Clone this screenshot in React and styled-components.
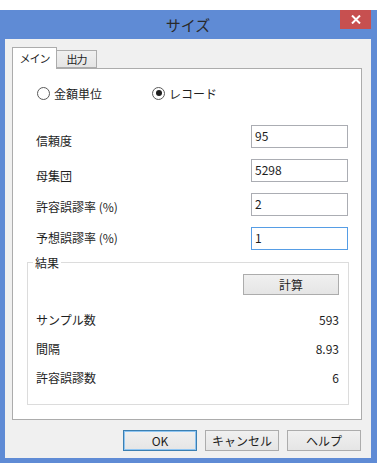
import React from 'react';
import styled, { createGlobalStyle } from 'styled-components';

const GlobalStyle = createGlobalStyle`
  body {
    margin: 0;
    background: #ffffff;
    font-family: "Noto Sans CJK JP", "Noto Sans", sans-serif;
    font-size: 12px;
    color: #1e1e1e;
  }
`;

const fields = [
  { label: '信頼度', value: '95', dy: 4 },
  { label: '母集団', value: '5298', dy: 5 },
  { label: '許容誤謬率 (%)', value: '2', dy: 2 },
  { label: '予想誤謬率 (%)', value: '1', dy: -1, focused: true },
];

const results = [
  { label: 'サンプル数', value: '593' },
  { label: '間隔', value: '8.93' },
  { label: '許容誤謬数', value: '6' },
];

export default function App() {
  return (
    <>
      <GlobalStyle />
      <Window>
        <TitleBar>
          <span />
          <Title>サイズ</Title>
          <CloseButton>
            <svg width="10" height="9" viewBox="0 0 10 9">
              <path d="M1 0.5 L9 8.5 M9 0.5 L1 8.5" stroke="#ffffff" strokeWidth="2" />
            </svg>
          </CloseButton>
        </TitleBar>
        <Client>
          <Tabs>
            <Tab $active>メイン</Tab>
            <Tab>出力</Tab>
          </Tabs>
          <Panel>
            <RadioRow>
              <RadioItem>
                <RadioCircle />
                金額単位
              </RadioItem>
              <RadioItem>
                <RadioCircle $checked />
                レコード
              </RadioItem>
            </RadioRow>
            <FieldGrid>
              {fields.map((f) => (
                <React.Fragment key={f.label}>
                  <FieldLabel $dy={f.dy}>{f.label}</FieldLabel>
                  <Input $focused={f.focused}>{f.value}</Input>
                </React.Fragment>
              ))}
            </FieldGrid>
            <Group>
              <Legend>結果</Legend>
              <CalcRow>
                <Button $width={96}>計算</Button>
              </CalcRow>
              {results.map((r) => (
                <ResultRow key={r.label}>
                  <span>{r.label}</span>
                  <span>{r.value}</span>
                </ResultRow>
              ))}
            </Group>
          </Panel>
          <ButtonBar>
            <Button $default>OK</Button>
            <Button>キャンセル</Button>
            <Button>ヘルプ</Button>
          </ButtonBar>
        </Client>
      </Window>
    </>
  );
}

const Window = styled.div`
  margin-top: 10px;
  width: 377px;
  height: 453px;
  box-sizing: border-box;
  padding: 0 6px 5px 5px;
  background: #5f8bd5;
  display: flex;
  flex-direction: column;
`;

const TitleBar = styled.div`
  height: 29px;
  display: grid;
  grid-template-columns: 1fr auto 1fr;
  align-items: start;
`;

const Title = styled.div`
  font-size: 15px;
  line-height: 29px;
  color: #2a2a2a;
`;

const CloseButton = styled.div`
  justify-self: end;
  width: 31px;
  height: 19px;
  background: #c75050;
  display: flex;
  align-items: center;
  justify-content: center;
`;

const Client = styled.div`
  flex: 1;
  background: #f0f0f0;
  padding: 8px 9px 7px 7px;
  display: flex;
  flex-direction: column;
`;

const Tabs = styled.div`
  display: flex;
  align-items: flex-end;
  height: 21px;
  position: relative;
  z-index: 1;
`;

const Tab = styled.div`
  box-sizing: border-box;
  height: ${(p) => (p.$active ? '22px' : '18px')};
  margin-bottom: ${(p) => (p.$active ? '-1px' : '0')};
  width: ${(p) => (p.$active ? '45px' : '41px')};
  border: 1px solid #acacac;
  border-bottom: ${(p) => (p.$active ? 'none' : '1px solid #acacac')};
  margin-left: ${(p) => (p.$active ? '0' : '-1px')};
  background: ${(p) => (p.$active ? '#ffffff' : 'linear-gradient(#f0f0f0, #e5e5e5)')};
  font-size: 11px;
  letter-spacing: -1px;
  text-align: center;
  line-height: ${(p) => (p.$active ? '20px' : '16px')};
  white-space: nowrap;
  overflow: hidden;
`;

const Panel = styled.div`
  box-sizing: border-box;
  height: 352px;
  background: #ffffff;
  border: 1px solid #acacac;
  padding: 16px 13px 0 14px;
`;

const RadioRow = styled.div`
  display: flex;
  padding-left: 10px;
  height: 16px;
  align-items: center;
`;

const RadioItem = styled.div`
  width: 115px;
  display: flex;
  align-items: center;
  gap: 4px;
  font-size: 12px;
`;

const RadioCircle = styled.span`
  box-sizing: border-box;
  width: 13px;
  height: 13px;
  border-radius: 50%;
  border: 1px solid #5a5a5a;
  background: #ffffff;
  display: flex;
  align-items: center;
  justify-content: center;

  &::after {
    content: '';
    width: 6px;
    height: 6px;
    border-radius: 50%;
    background: ${(p) => (p.$checked ? '#1e1e1e' : 'transparent')};
  }
`;

const FieldGrid = styled.div`
  margin-top: 24px;
  padding-left: 9px;
  display: grid;
  grid-template-columns: 1fr 97px;
  grid-auto-rows: 23px;
  row-gap: 11px;
`;

const FieldLabel = styled.div`
  line-height: 23px;
  margin-top: ${(p) => p.$dy}px;
  font-size: 12px;
`;

const Input = styled.div`
  box-sizing: border-box;
  border: 1px solid ${(p) => (p.$focused ? '#569de5' : '#abadb3')};
  background: #ffffff;
  padding: 0 3px;
  font-size: 12px;
  line-height: 19px;
`;

const Group = styled.fieldset`
  margin: 4px -1px 0 0;
  padding: 0 9px 12px 8px;
  border: 1px solid #dcdcdc;
  min-width: 0;
`;

const Legend = styled.legend`
  padding: 0 2px;
  margin-left: -3px;
  font-size: 12px;
  line-height: 17px;
`;

const CalcRow = styled.div`
  display: flex;
  justify-content: flex-end;
  padding-top: 3px;
  margin-bottom: 10px;
`;

const ResultRow = styled.div`
  display: flex;
  justify-content: space-between;
  height: 29px;
  align-items: center;
  font-size: 12px;
`;

const ButtonBar = styled.div`
  display: flex;
  justify-content: flex-end;
  gap: 8px;
  margin-top: 10px;
  margin-right: 1px;
`;

const Button = styled.div`
  box-sizing: border-box;
  width: ${(p) => p.$width || 74}px;
  height: 21px;
  border: 1px solid ${(p) => (p.$default ? '#3c7fb1' : '#acacac')};
  box-shadow: ${(p) => (p.$default ? 'inset 0 0 0 1px #8ec5f2' : 'none')};
  background: linear-gradient(#f0f0f0, #e5e5e5);
  display: flex;
  align-items: center;
  justify-content: center;
  font-size: 12px;
  color: #1e1e1e;
`;
